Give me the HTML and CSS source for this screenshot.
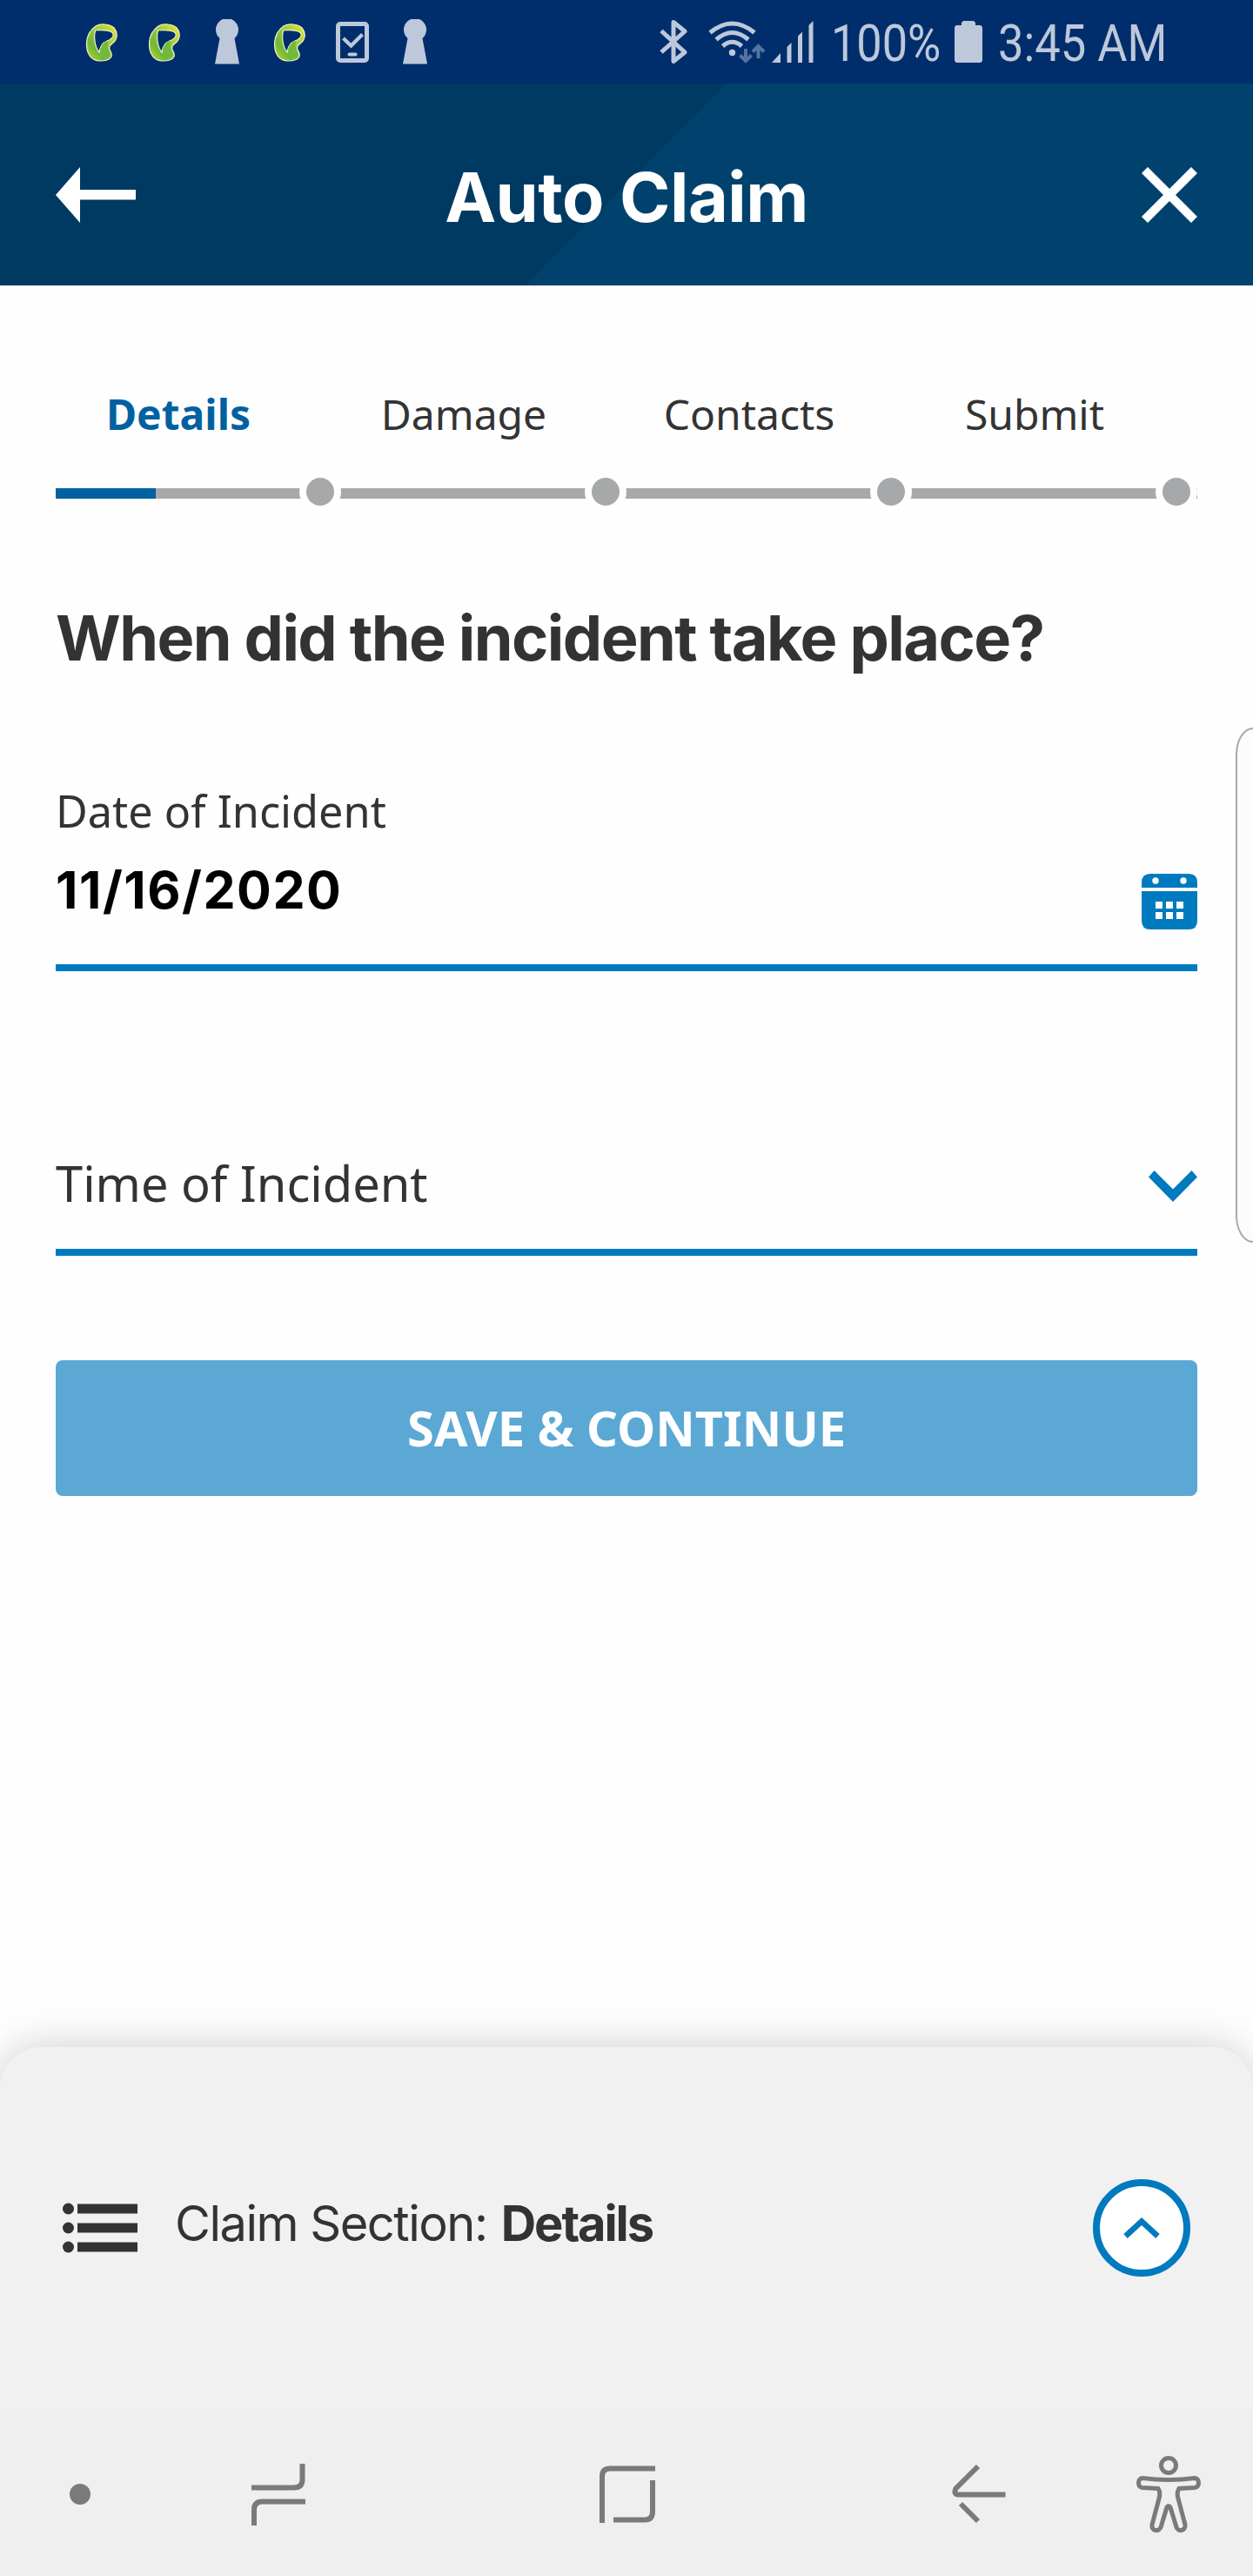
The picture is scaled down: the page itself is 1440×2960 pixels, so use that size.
FILE: index.html
```html
<!DOCTYPE html>
<html lang="en">
<head>
<meta charset="utf-8">
<title>Auto Claim</title>
<link rel="stylesheet" href="styles.css">
</head>
<body>
<svg width="0" height="0" class="defs">
  <defs>
    <linearGradient id="leaf" x1="0" y1="1" x2="1" y2="0">
      <stop offset="0" stop-color="#c5dc2c"/><stop offset=".3" stop-color="#6fb63c"/><stop offset=".6" stop-color="#a2ca35"/><stop offset="1" stop-color="#e6e92f"/>
    </linearGradient>
    <symbol id="ribbon" viewBox="0 0 36 44">
      <path fill="url(#leaf)" fill-rule="evenodd" stroke="#eef5cf" stroke-width="1.200" d="M11 3C16 0 27 0 32 5c5 6 4 14-2 18-3 2-4 4-3 7 1 2 3 5 2 8-2 4-8 5-13 5C6 43 .5 35 .5 24 .5 15 4 8 11 3ZM10.500 8c-2 8-.5 19 4.500 25 1-7 4-11 9-13 5-2 8-4 7-8-1-4-12-5-20.500-4Z"/>
      <path fill="#72b93c" d="M16 32c1-7 4-11 9-12-1 7 0 10 2 13 1 2 1 4 0 5-4 1-9 0-11-6Z"/>
    </symbol>
    <symbol id="keyhole" viewBox="0 0 28 52">
      <path fill="#bdc8da" d="M5.500 22A13 13 0 1 1 22.500 22L28 51.500H0Z"/>
    </symbol>
  </defs>
</svg>
<div class="screen">
  <div class="status">
    <div class="notices">
      <svg class="ribbon" width="36" height="44"><use href="#ribbon"/></svg>
      <svg class="ribbon" width="36" height="44"><use href="#ribbon"/></svg>
      <svg class="keyhole" width="28" height="52"><use href="#keyhole"/></svg>
      <svg class="ribbon" width="36" height="44"><use href="#ribbon"/></svg>
      <svg class="tablet" width="38" height="47" viewBox="0 0 38 47" fill="none" stroke="#bdc8da">
        <rect x="2.500" y="2.500" width="33" height="42" rx="2.500" stroke-width="5"/>
        <path d="M8.500 19l9 8.500 13-13" stroke-width="4.200"/><path d="M15.500 37.500h7" stroke-width="4" stroke-linecap="round"/>
      </svg>
      <svg class="keyhole" width="28" height="52"><use href="#keyhole"/></svg>
    </div>
    <div class="system">
      <svg class="bluetooth" width="32" height="50" viewBox="0 0 32 50" fill="none" stroke="#bdc8da" stroke-width="5" stroke-linejoin="round">
        <path d="M2 12.500 29 37 16 47.500V2.500L29 13 2 37"/>
      </svg>
      <svg class="wifi" width="66" height="50" viewBox="0 0 66 50" fill="none" stroke="#bdc8da" stroke-width="5">
        <path d="M2 13.500Q27.500-7.500 53 13.500M9 21.500Q27.500 5.500 46 21.500M16.500 29Q27.500 19.500 38.500 29"/>
        <circle cx="27.500" cy="36.500" r="3.700" fill="#bdc8da" stroke="none"/>
        <path stroke="#5473a0" stroke-width="4" d="M43 32v14M36.500 39.500 43 46l6.500-6.500M57.500 43V29M51 35.500l6.500-6.500 6.500 6.500"/>
      </svg>
      <svg class="signal" width="48" height="48" viewBox="0 0 48 48" fill="#bdc8da">
        <path d="M0 48 10 37v11ZM17.500 48V30l5-5v23ZM30 48V17.500l5-5V48ZM42.500 48V5l5-5v48Z"/>
      </svg>
      <span class="status-text percent">100%</span>
      <svg class="battery" width="32" height="48" viewBox="0 0 32 48"><path fill="#bdc8da" d="M10 0h12l2 2v3h6l2 2v39l-2 2H2l-2-2V7l2-2h6V2Z"/></svg>
      <span class="status-text clock">3:45 AM</span>
    </div>
  </div>

  <header class="topbar">
    <svg width="92" height="64" viewBox="0 0 92 64" fill="#fff"><path d="M28 0v26h64v11.500H28V64L0 32Z"/></svg>
    <h1>Auto Claim</h1>
    <svg width="64" height="64" viewBox="0 0 64 64" fill="none" stroke="#fff" stroke-width="10"><path d="M3.500 3.500l57 57M60.500 3.500l-57 57"/></svg>
  </header>

  <main>
    <ol class="steps">
      <li class="active"><span>Details</span><i class="track"></i></li>
      <li><span>Damage</span><i class="track"></i></li>
      <li><span>Contacts</span><i class="track"></i></li>
      <li><span>Submit</span><i class="track"></i></li>
    </ol>
    <h2>When did the incident take place?</h2>
    <div class="field date">
      <div><label>Date of Incident</label><strong>11/16/2020</strong></div>
      <svg width="64" height="64" viewBox="0 0 64 64" fill="#007abf">
        <path d="M0 16V10Q0 0 10 0H54Q64 0 64 10V16ZM0 20H64V54Q64 64 54 64H10Q0 64 0 54Z"/>
        <g fill="#fff"><circle cx="16" cy="8" r="3.700"/><circle cx="48" cy="8" r="3.700"/><path d="M16 32h8v8h-8zm12 0h8v8h-8zm12 0h8v8h-8zM16 44h8v8h-8zm12 0h8v8h-8zm12 0h8v8h-8z"/></g>
      </svg>
    </div>
    <div class="field time">
      <label>Time of Incident</label>
      <svg width="56" height="36" viewBox="0 0 56 36"><path fill="#007abf" d="M6.500 0 28 21.500 49.500 0 56 7.500 28 36 0 7.500Z"/></svg>
    </div>
    <button class="save">SAVE &amp; CONTINUE</button>
  </main>

  <div class="edge-handle"></div>

  <section class="sheet">
    <svg width="86" height="58" viewBox="0 0 86 58" fill="#333">
      <circle cx="6.500" cy="7" r="6.500"/><circle cx="6.500" cy="29" r="6.500"/><circle cx="6.500" cy="51" r="6.500"/>
      <path d="M17 1.500h69v11H17zM17 23.500h69v11H17zM17 45.500h69v11H17z"/>
    </svg>
    <p><span>Claim Section:</span> <b>Details</b></p>
    <div class="expand"><svg width="42" height="24" viewBox="0 0 42 24" fill="none" stroke="#007abf" stroke-width="6.500"><path d="M2.500 21.500 21 4.500l18.500 17"/></svg></div>
  </section>

  <nav class="navbar">
    <svg class="dot" width="24" height="24"><circle cx="12" cy="12" r="12" fill="#7a7a7a"/></svg>
    <svg class="recents" width="62" height="71" viewBox="0 0 62 71"><path d="M0 27.500H49Q58.500 27.500 58.500 18V0M62 43.500H12Q3 43.500 3 53V71"/></svg>
    <svg class="home" width="64" height="66" viewBox="0 0 64 66"><path d="M64 3.500H12Q3 3.500 3 12.500V66M61 17V53Q61 62.500 52 62.500H16"/></svg>
    <svg class="back" width="62" height="70" viewBox="0 0 62 70"><path d="M30 3 4.500 28.500Q1.500 35 7 35.500H61.500M10 46 30 66"/></svg>
    <svg class="person" width="74" height="88" viewBox="0 0 74 88">
      <circle cx="37" cy="11" r="8.500"/>
      <path d="M7 25.500Q37 29.500 67 25.500C73 26 73 36 67 36.500L49 37.500Q46 42 48 49L56 79C57 86 48 88 46 82L39 59Q37 56 35 59L28 82C25 88 17 86 18 79L26 49Q28 42 25 37.500L7 36.500C1 36 1 26 7 25.500Z"/>
    </svg>
  </nav>
</div>
</body>
</html>
```
FILE: styles.css
```css
* { box-sizing: border-box; }
body { margin: 0; background: #fefefe; color: #333; font-family: "Noto Sans", sans-serif; }
svg { display: block; flex: none; }
.defs { position: absolute; }
h1, h2, p, ol { margin: 0; padding: 0; }
.screen { position: relative; width: 1440px; height: 2960px; overflow: hidden; display: flex; flex-direction: column; }

.status { height: 96px; background: #002e6c; display: flex; justify-content: space-between; align-items: flex-start; padding: 0 101px 0 99px; flex: none; }
.notices, .system { display: flex; align-items: flex-start; }
.ribbon { margin: 27px 36px 0 0; }
.keyhole { margin: 22px 40px 0 4px; }
.tablet { margin: 25px 35px 0 -1px; }
.bluetooth { margin-top: 23px; }
.wifi { margin: 24px 0 0 24px; }
.signal { margin: 24px 0 0 7px; }
.battery { margin: 24px 0 0 18px; }
.status-text { font: 400 60px/70px Roboto, sans-serif; color: #bdc8da; white-space: nowrap; transform-origin: 0 0; margin-top: 15px; }
.percent { width: 124px; margin-left: 20px; transform: scaleX(.87); }
.clock { width: 192px; margin-left: 18px; transform: scaleX(.875); }

.topbar { height: 232px; flex: none; display: flex; justify-content: space-between; align-items: center; padding: 24px 64px 0; color: #fff; background: linear-gradient(135deg, #003a63 590.500px, #00426d 591.500px); }
h1 { font: 700 79px/100px Inter, sans-serif; letter-spacing: -.5px; margin-right: 28px; white-space: nowrap; padding-top: 4px; }

main { padding: 0 64px; flex: 1; }
.steps { display: grid; grid-template-columns: repeat(4, 328px); margin-top: 116px; list-style: none; }
.steps span { display: block; width: 282px; text-align: center; font-size: 48px; line-height: 64px; }
.steps .active { color: #0061a1; }
.steps .active span { font-weight: 700; }
.track { display: block; height: 12px; margin-top: 53px; background: #a7a8aa; position: relative; }
.active .track { background: linear-gradient(90deg, #0061a1 115px, #a7a8aa 115px); }
.track::after { content: ""; position: absolute; right: 8px; top: -12px; width: 32px; height: 32px; border-radius: 50%; background: #a7a8aa; box-shadow: 0 0 0 8px #fefefe; }

h2 { font: 700 72px/88px Inter, sans-serif; letter-spacing: -1.550px; margin-top: 116px; white-space: nowrap; }
.field { display: flex; justify-content: space-between; border-bottom: 8px solid #007abf; }
.date { height: 223px; margin-top: 116px; padding-top: 4px; }
.date label { display: block; font-size: 50.400px; line-height: 70px; }
.date strong { display: block; font: 700 59px/70px Inter, sans-serif; letter-spacing: 1.500px; color: #000; margin-top: 21px; }
.date svg { margin-top: 107px; }
.time { height: 143px; margin-top: 184px; }
.time label { font-size: 56px; line-height: 78px; margin-top: 20px; }
.time svg { margin-top: 45px; }
.save { display: block; width: 100%; height: 156px; margin-top: 120px; border: 0; border-radius: 8px; background: #5ba8d5; color: #fff; font: 700 56px/76px "Noto Sans", sans-serif; padding: 0 0 2px; }

.edge-handle { position: absolute; left: 1420px; top: 836px; width: 40px; height: 592px; border: 2px solid #aaa; border-radius: 22px / 34px; background: #fcfcfc; }

.sheet { height: 416px; flex: none; border-radius: 48px 48px 0 0; background: #f1f1f1; box-shadow: 0 0 48px rgba(0, 0, 0, .2); display: flex; align-items: center; padding: 0 72px; }
.sheet p { font: 400 56px/70px Inter, sans-serif; margin-left: 43px; margin-top: -11px; white-space: nowrap; letter-spacing: -1.500px; }
.sheet b { letter-spacing: -2.100px; margin-left: 2px; }
.expand { width: 112px; height: 112px; margin-left: auto; border: 8px solid #007abf; border-radius: 50%; background: #fff; display: grid; place-items: center; }

.navbar { height: 192px; flex: none; background: #efefef; display: flex; align-items: center; padding: 4px 60px 0 80px; }
.navbar path, .person circle { fill: none; stroke: #7a7a7a; stroke-width: 6; }
.navbar .person path, .navbar .person circle { stroke-width: 5; }
.recents { margin-left: 185px; }
.home { margin-left: 338px; }
.back { margin-left: 341px; }
.person { margin-left: auto; }
```
